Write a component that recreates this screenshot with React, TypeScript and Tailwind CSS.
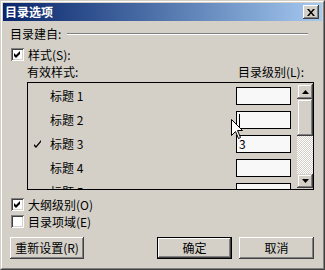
import React from "react";

const raised =
  "bg-[#d4d0c8] shadow-[inset_-1px_-1px_0_#404040,inset_1px_1px_0_#ffffff,inset_-2px_-2px_0_#808080]";
const raisedScroll =
  "bg-[#d4d0c8] shadow-[inset_-1px_-1px_0_#404040,inset_1px_1px_0_#d4d0c8,inset_-2px_-2px_0_#808080,inset_2px_2px_0_#ffffff]";

function CheckBox({ checked }: { checked: boolean }) {
  return (
    <div className="w-[13px] h-[13px] bg-white shadow-[inset_1px_1px_0_#808080,inset_-1px_-1px_0_#ffffff,inset_2px_2px_0_#404040,inset_-2px_-2px_0_#d4d0c8] shrink-0 relative">
      {checked && (
        <svg width="13" height="13" viewBox="0 0 13 13" className="absolute left-0 top-0">
          <path d="M3 5 L5 7 L9 3 L9 6 L5 10 L3 8 Z" fill="#000" />
        </svg>
      )}
    </div>
  );
}

function Row({ label, tick, children }: { label: string; tick?: boolean; children?: React.ReactNode }) {
  return (
    <div className="h-[24px] flex items-center shrink-0">
      <div className="w-[22px] h-full flex items-center justify-end pr-[8px]">
        {tick && (
          <svg width="8" height="8" viewBox="0 0 8 8">
            <path d="M0 4 L2 6 L7 0 L7 2 L2 8 L0 6 Z" fill="#000" />
          </svg>
        )}
      </div>
      <div className="flex-1 text-[12px] leading-[14px]">{label}</div>
      <div className="w-[55px] h-[18px] border border-black bg-[#f8f8f8] mr-[6px] relative flex items-center pl-[2px] text-[12px] leading-[14px]">
        {children}
      </div>
    </div>
  );
}

export default function App() {
  return (
    <div className="w-[325px] h-[270px] font-['Noto_Sans_CJK_SC','Noto_Sans',sans-serif] text-black select-none relative">
      <div className="w-full h-full border border-t-[#d4d0c8] border-l-[#d4d0c8] border-b-[#404040] border-r-[#404040] bg-[#d4d0c8]">
        <div className="w-full h-full border border-t-white border-l-white border-b-[#808080] border-r-[#808080] p-[1px] flex flex-col">
          {/* Title bar */}
          <div className="h-[18px] shrink-0 bg-gradient-to-r from-[#0a246a] to-[#a6caf0] flex items-center justify-between pl-[2px] pr-[3px]">
            <span className="text-white font-bold text-[12px] leading-[14px]">目录选项</span>
            <div className={`w-[16px] h-[14px] ${raised} flex items-center justify-center`}>
              <svg width="8" height="7" viewBox="0 0 8 7">
                <path d="M0 0 H2 L4 2.5 L6 0 H8 L5 3.5 L8 7 H6 L4 4.5 L2 7 H0 L3 3.5 Z" fill="#000" />
              </svg>
            </div>
          </div>

          {/* Body */}
          <div className="flex flex-col pl-[7px] pr-[8px]">
            <div className="mt-[6px] h-[14px] flex items-center text-[12px] leading-[14px]">
              <span>目录建自:</span>
              <div className="flex-1 ml-[6px] mr-[6px] h-[2px] border-t border-t-[#808080] border-b border-b-white" />
            </div>

            <div className="mt-[7px] h-[13px] flex items-center pl-[1px]">
              <CheckBox checked />
              <span className="ml-[4px] text-[12px] leading-[14px]">样式(S):</span>
            </div>

            <div className="mt-[4px] h-[14px] flex items-center justify-between pl-[17px] pr-[10px] text-[12px] leading-[14px]">
              <span>有效样式:</span>
              <span>目录级别(L):</span>
            </div>

            {/* List box */}
            <div className="mt-[3px] ml-[17px] w-[287px] h-[108px] border border-black bg-[#d4d0c8] flex overflow-hidden relative">
              <div className="flex-1 flex flex-col pt-[1px] overflow-hidden">
                <Row label="标题 1" />
                <Row label="标题 2">
                  <div className="w-[1px] h-[13px] bg-black" />
                </Row>
                <Row label="标题 3" tick>
                  <span>3</span>
                </Row>
                <Row label="标题 4" />
                <Row label="标题 5" />
              </div>
              {/* Scrollbar */}
              <div className="w-[16px] flex flex-col pt-[1px] pb-[1px]">
                <div className={`h-[15px] shrink-0 ${raisedScroll} flex items-center justify-center`}>
                  <svg width="7" height="4" viewBox="0 0 7 4">
                    <path d="M3.5 0 L7 4 H0 Z" fill="#000" />
                  </svg>
                </div>
                <div className={`h-[37px] shrink-0 ${raisedScroll}`} />
                <div className="flex-1 bg-[image:repeating-conic-gradient(#ffffff_0_25%,#d4d0c8_0_50%)] bg-[length:2px_2px]" />
                <div className={`h-[14px] shrink-0 ${raisedScroll} flex items-center justify-center`}>
                  <svg width="7" height="4" viewBox="0 0 7 4">
                    <path d="M0 0 H7 L3.5 4 Z" fill="#000" />
                  </svg>
                </div>
              </div>
            </div>

            <div className="mt-[8px] h-[13px] flex items-center pl-[1px]">
              <CheckBox checked />
              <span className="ml-[4px] text-[12px] leading-[14px]">大纲级别(O)</span>
            </div>
            <div className="mt-[4px] h-[13px] flex items-center pl-[1px]">
              <CheckBox checked={false} />
              <span className="ml-[4px] text-[12px] leading-[14px]">目录项域(E)</span>
            </div>

            {/* Buttons */}
            <div className="mt-[9px] h-[22px] flex items-center">
              <div className={`w-[74px] h-full ${raised} flex items-center justify-center text-[12px] leading-[14px]`}>
                重新设置(R)
              </div>
              <div className="ml-[73px] w-[75px] h-full border border-black">
                <div className={`w-full h-full ${raised} flex items-center justify-center text-[12px] leading-[14px]`}>
                  确定
                </div>
              </div>
              <div className={`ml-[7px] w-[75px] h-full ${raised} flex items-center justify-center text-[12px] leading-[14px]`}>
                取消
              </div>
            </div>
          </div>
        </div>
      </div>

      {/* Mouse cursor */}
      <svg width="13" height="21" viewBox="0 0 13 21" className="absolute left-[231px] top-[119px]">
        <path
          d="M0.5 0.5 L0.5 16.5 L4.5 12.5 L7.5 19.5 L9.5 18.5 L6.5 11.5 L11.5 11.5 Z"
          fill="#ffffff"
          stroke="#000000"
          strokeWidth="1"
        />
      </svg>
    </div>
  );
}
